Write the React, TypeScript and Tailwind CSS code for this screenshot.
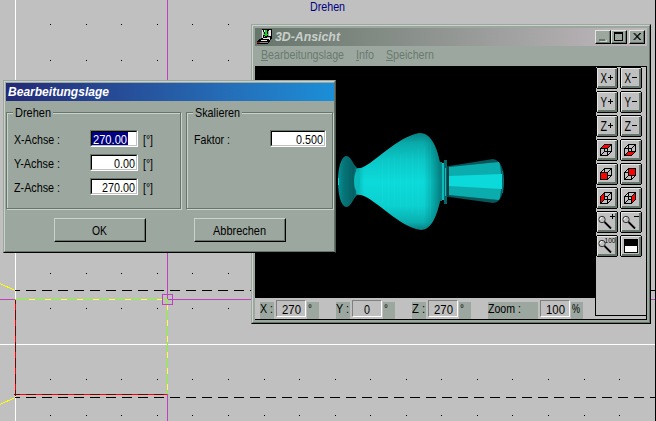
import React from "react";

const FONT = "font-['Liberation_Sans',Arial,sans-serif]";
const XS = Array.from({ length: 18 }, (_, i) => Math.floor(15.2 + 35.55 * (i + 1)));
const YS = [24, 60, 95, 131, 166, 202, 237, 273, 308, 379, 415];

function Drawing() {
  return (
    <svg className="absolute inset-0" width="656" height="421" shapeRendering="crispEdges" fill="none">
      {YS.map((y) => XS.map((x) => <rect key={`${x}-${y}`} x={x} y={y} width="1" height="1" fill="#000" />))}
      <path d="M15.5 0V421M0 344.5H655" stroke="#fff" />
      <path d="M10 290.5H655M10 397.5H655" stroke="#000" strokeDasharray="10 6" />
      <path d="M0 290.5H15M0 397.5H15" stroke="#c0c0c0" />
      <path d="M0 283.5L15 290.5M0 404.5L15 397.5" stroke="#ff0" />
      <path d="M167.5 0V421M0 299.5H655" stroke="#c040c0" />
      <path d="M15 299.5H167M167.5 299V394" stroke="#80ff20" />
      <path d="M29 299.5H162" stroke="#ffff40" strokeDasharray="6 10" />
      <path d="M167.5 304V394" stroke="#ffff40" strokeDasharray="6 10" />
      <path d="M15.5 300V396M14 394.5H167" stroke="#800000" />
      <path d="M15.5 304V394M20 394.5H167" stroke="#f00" strokeDasharray="6 10" />
      <rect x="162.5" y="294.5" width="10" height="10" stroke="#c040c0" />
      <path d="M655.5 0V421" stroke="#000" />
    </svg>
  );
}

function T({ children, w, className = "" }: { children: string; w: number; className?: string }) {
  return (
    <svg width={w} height="16" className={`shrink-0 overflow-visible ${className}`}>
      <text x="0" y="13" textLength={w} lengthAdjust="spacingAndGlyphs" fill="currentColor" className={`${FONT} text-[13px]`}>
        {children}
      </text>
    </svg>
  );
}

function Field({ value, w, wide, selected }: { value: string; w: number; wide?: boolean; selected?: boolean }) {
  return (
    <div className={`${wide ? "w-[56px]" : "w-[48px]"} flex h-[17px] border border-t-[#66766b] border-l-[#66766b] border-r-white border-b-white`}>
      <div className={`flex flex-1 items-center border border-t-black border-l-black border-r-[#c0c0c0] border-b-[#c0c0c0] bg-white ${selected ? "justify-start" : "justify-end"}`}>
        <div className={`flex h-[13px] items-center px-px ${selected ? "bg-[#000080] text-white" : ""}`}>
          <T w={w}>{value}</T>
        </div>
      </div>
    </div>
  );
}

function Group({ title, tw, children, className }: { title: string; tw: number; children: React.ReactNode; className: string }) {
  return (
    <div className={`h-[97px] border border-[#66766b] shadow-[1px_1px_0_#c9d3cc,inset_1px_1px_0_#c9d3cc] ${className}`}>
      <div className="-mt-[9px] ml-[6px] flex w-fit bg-[#9ca89f] px-[2px]">
        <T w={tw}>{title}</T>
      </div>
      {children}
    </div>
  );
}

function AxisRow({ label, value, w, selected }: { label: string; value: string; w: number; selected?: boolean }) {
  return (
    <div className="flex h-[17px] items-center">
      <div className="flex w-[76px]"><T w={46}>{label}</T></div>
      <Field value={value} w={w} selected={selected} />
      <T w={10} className="ml-[5px]">[°]</T>
    </div>
  );
}

function PushButton({ children, w }: { children: string; w: number }) {
  return (
    <button className="flex h-[24px] w-[92px] border border-t-[#c9d3cc] border-l-[#c9d3cc] border-r-black border-b-black">
      <span className="flex h-full flex-1 items-center justify-center border-r border-b border-[#66766b]">
        <T w={w}>{children}</T>
      </span>
    </button>
  );
}

function Dialog() {
  return (
    <div className="absolute left-[3px] top-[80px] h-[173px] w-[333px] border border-t-[#9ca89f] border-l-[#9ca89f] border-r-[#4c5a51] border-b-black bg-[#9ca89f] text-black">
      <div className="h-full border border-t-[#c9d3cc] border-l-[#c9d3cc] border-r-[#66766b] border-b-[#66766b] pt-px pl-px">
        <div className="flex h-[18px] w-[328px] items-center bg-linear-to-r from-[#232a76] to-[#1a8fd8] pl-[2px] text-white">
          <svg width="101" height="16" className="overflow-visible">
            <text x="0" y="12" textLength="101" lengthAdjust="spacingAndGlyphs" fill="currentColor" className={`${FONT} text-[12.5px] font-bold italic`}>Bearbeitungslage</text>
          </svg>
        </div>
        <div className="mt-[11px] flex gap-[5px]">
          <Group title="Drehen" tw={36} className="w-[175px]">
            <div className="mt-[10px] flex flex-col gap-[7px] pl-[7px]">
              <AxisRow label="X-Achse :" value="270.00" w={34} selected />
              <AxisRow label="Y-Achse :" value="0.00" w={21} />
              <AxisRow label="Z-Achse :" value="270.00" w={33} />
            </div>
          </Group>
          <Group title="Skalieren" tw={45} className="w-[147px]">
            <div className="mt-[10px] flex h-[17px] items-center pl-[7px]">
              <div className="flex w-[76px]"><T w={36}>Faktor :</T></div>
              <Field value="0.500" w={27} wide />
            </div>
          </Group>
        </div>
        <div className="mt-[9px] ml-[48px] flex gap-[48px]">
          <PushButton w={15}>OK</PushButton>
          <PushButton w={53}>Abbrechen</PushButton>
        </div>
      </div>
    </div>
  );
}

function MenuItem({ children, w, u }: { children: string; w: number; u: number }) {
  return (
    <svg width={w} height="16" className="overflow-visible text-[#697a70]">
      <text x="0" y="11" textLength={w} lengthAdjust="spacingAndGlyphs" fill="currentColor" className={`${FONT} text-[12.5px]`}>{children}</text>
      <path d={`M0 12.5H${u}`} stroke="currentColor" shapeRendering="crispEdges" />
    </svg>
  );
}

function CaptionButton({ children }: { children: React.ReactNode }) {
  return (
    <button className="block h-[14px] w-[16px] border border-t-[#e0e5e1] border-l-[#e0e5e1] border-r-black border-b-black bg-[#9ca89f]">
      <svg width="14" height="12" className="block" shapeRendering="crispEdges" fill="none" stroke="#000">
        <path d="M13.5 0V11.5H0" stroke="#66766b" />
        {children}
      </svg>
    </button>
  );
}

function AppIcon() {
  return (
    <svg width="16" height="16" className="block" shapeRendering="crispEdges">
      <path d="M5 0H15V9L11 15H0V12L5 9Z" fill="#000" />
      <path d="M5 1H6V9H5ZM7 1H9V3H7ZM12 1H14V7H12ZM6 9H12V10H6ZM4 11H10V12H4ZM12 9H13V11H12Z" fill="#e8e8e8" />
      <path d="M11 2H12V7H11ZM6 3H7V6H6Z" fill="#aaa" />
      <path d="M8 1H10V7H8ZM7 5H11V6H7Z" fill="#10d820" />
      <path d="M7 7H8V8H7ZM10 8H13V9H10Z" fill="#aaa" />
      <path d="M0 13H3V14H0Z" fill="#b01020" />
      <path d="M3 13H11V14H3Z" fill="#888" />
    </svg>
  );
}

const BODY = "M356 169L361 168C376 162 397 137 419 133C432 132 438 151 440 163V201C437 214 432 230 421 230C400 228 376 199 361 195L356 194Z";

function Vase() {
  const rows = Array.from({ length: 9 }, (_, i) => i);
  return (
    <svg width="341" height="232" viewBox="255 66 341 232" className="block bg-black">
      <defs>
        <linearGradient id="body" x1="0" y1="0" x2="0" y2="1">
          <stop offset="0" stopColor="#087f80" />
          <stop offset=".1" stopColor="#0aa9a9" />
          <stop offset=".28" stopColor="#0cc7c7" />
          <stop offset=".5" stopColor="#0cdada" />
          <stop offset=".75" stopColor="#0cd0d0" />
          <stop offset=".92" stopColor="#0aafaf" />
          <stop offset="1" stopColor="#087f80" />
        </linearGradient>
        <linearGradient id="edge" x1="0" y1="0" x2="1" y2="0">
          <stop offset="0" stopColor="#055" stopOpacity=".35" />
          <stop offset=".1" stopColor="#077" stopOpacity="0" />
          <stop offset=".8" stopColor="#077" stopOpacity="0" />
          <stop offset="1" stopColor="#055" stopOpacity=".65" />
        </linearGradient>
        <linearGradient id="foot" x1="0" y1="0" x2="1" y2="0">
          <stop offset="0" stopColor="#089395" />
          <stop offset=".25" stopColor="#067477" />
          <stop offset=".65" stopColor="#056064" />
          <stop offset="1" stopColor="#089798" />
        </linearGradient>
      </defs>
      <path d="M346 156C351 156 353 164 357 168H362V195H357C353 199 351 207 346 207C341 206 338 195 338 181C338 168 341 157 346 156Z" fill="url(#foot)" />
      <path d="M338 178H339V185H338Z" fill="#0cd6d6" />
      <path d={BODY} fill="url(#body)" />
      <path d={BODY} fill="url(#edge)" />
      <g stroke="#5ff" strokeOpacity=".06" fill="none" shapeRendering="crispEdges">
        {rows.map((i) => <path key={i} d={`M${382 + i * 6}.5 ${160 - i * 2}V${203 + i * 2}`} />)}
      </g>
      <ellipse cx="357" cy="181" rx="3" ry="10" fill="#0ab9ba" />
      <path d="M440 162H442V201H440Z" fill="#087f82" />
      <path d="M442 163H444V200H442Z" fill="#0bbcbd" />
      <path d="M444 160H447V204H444Z" fill="#066568" />
      <path d="M445 168H446V196H445Z" fill="#0bbabb" />
      <path d="M447 166H449V197H447Z" fill="#043d3f" />
      <path d="M449 166L493 159C500 160 504 168 504 181C504 194 500 203 493 203L449 197Z" fill="#07575a" />
      <path d="M449 167L499 162C502 168 502 195 499 200L449 195Z" fill="#0aacae" />
      <path d="M449 176L502 174V189L449 186Z" fill="#0cdada" />
      <path d="M502.5 171Q504 181 502.5 193" stroke="#087b7e" fill="none" />
    </svg>
  );
}

function Cube({ face }: { face: string }) {
  return (
    <g shapeRendering="crispEdges" fill="none" stroke="#000">
      <path d="M3.5 8.5H10.5V15.5H3.5ZM7.5 4.5H14.5V11.5H7.5ZM3.5 8.5L7.5 4.5M10.5 8.5L14.5 4.5M3.5 15.5L7.5 11.5M10.5 15.5L14.5 11.5" />
      <path d={face} fill="#f00" />
    </g>
  );
}

function Lens({ mark }: { mark?: string }) {
  return (
    <g fill="none" stroke="#000">
      <circle cx="5" cy="7.5" r="3.2" fill="#c0c0c0" stroke="#333" />
      <path d="M3 7.5Q3.2 5.7 5 5.5" stroke="#fff" />
      <path d="M7.5 10L14 16.5" strokeWidth="1.8" />
      {mark && <path d={mark} shapeRendering="crispEdges" />}
    </g>
  );
}

function Letter({ d, plus }: { d: string; plus: boolean }) {
  return (
    <g fill="none" stroke="#000">
      <text x="3.5" y="14.5" textLength="6.5" lengthAdjust="spacingAndGlyphs" stroke="none" fill="#000" className={`${FONT} text-[14.5px]`}>{d}</text>
      <path d={plus ? "M10.5 9.5H15.5M13 7V12" : "M10.5 9.5H15.5"} shapeRendering="crispEdges" />
    </g>
  );
}

const TOOLS: React.ReactNode[] = [
  <Letter d="X" plus />, <Letter d="X" plus={false} />,
  <Letter d="Y" plus />, <Letter d="Y" plus={false} />,
  <Letter d="Z" plus />, <Letter d="Z" plus={false} />,
  <Cube face="M3.5 8.5L7.5 4.5H14.5L10.5 8.5Z" />, <Cube face="M3.5 15.5L7.5 11.5H14.5L10.5 15.5Z" />,
  <Cube face="M3.5 8.5H10.5V15.5H3.5Z" />, <Cube face="M7.5 4.5H14.5V11.5H7.5Z" />,
  <Cube face="M3.5 8.5L7.5 4.5V11.5L3.5 15.5Z" />, <Cube face="M10.5 8.5L14.5 4.5V11.5L10.5 15.5Z" />,
  <Lens mark="M13 4.5H18M15.5 2V7" />, <Lens mark="M13 4.5H18" />,
  <g><Lens /><text x="7.5" y="7" textLength="11" lengthAdjust="spacingAndGlyphs" className={`${FONT} text-[8px]`}>100</text></g>,
  <g shapeRendering="crispEdges"><path d="M3 3H17V17H3Z" fill="#000" /><path d="M4 10H16V16H4Z" fill="#fff" /></g>,
];

function ToolButton({ children }: { children: React.ReactNode }) {
  return (
    <button className="h-[22px] w-[22px]">
      <svg width="22" height="22" className="block">
        <g shapeRendering="crispEdges" fill="none">
          <path d="M1 .5H21M1 21.5H21M21.5 1V21M.5 1V21" stroke="#000" />
          <path d="M1.5 20V1.5H20" stroke="#e4e8e5" />
          <path d="M2 20H20V2" stroke="#66766b" strokeWidth="2" />
        </g>
        <g transform="translate(1 1)">{children}</g>
      </svg>
    </button>
  );
}

function StatusField({ label, lw, value, vw, unit, wide }: { label: string; lw: number; value: string; vw: number; unit: string; wide?: boolean }) {
  return (
    <div className="flex items-end">
      <div className={`flex h-[17px] items-start bg-[#9ca89f] ${wide ? "w-[50px]" : "w-[14px]"}`}>
        <T w={lw} className="-mt-[2px]">{label}</T>
      </div>
      <div className="mx-[2px] mb-[2px] flex h-[17px] w-[30px] items-center justify-center border border-t-[#808080] border-l-[#808080] border-r-white border-b-white">
        <T w={vw}>{value}</T>
      </div>
      <div className="-ml-px flex h-[17px] w-[12px] items-start bg-[#9ca89f] pl-px">
        <T w={unit === "%" ? 8 : 4} className="-mt-[2px]">{unit}</T>
      </div>
    </div>
  );
}

function ViewWindow() {
  return (
    <div className="absolute left-[251px] top-[24px] h-[300px] w-[400px] border border-t-[#9ca89f] border-l-[#9ca89f] border-r-black border-b-black bg-[#9ca89f]">
      <div className="h-full border border-t-[#c9d3cc] border-l-[#c9d3cc] border-r-[#66766b] border-b-[#66766b] pt-[2px] pl-[2px]">
        <div className="flex h-[18px] w-[392px] items-center bg-linear-to-r from-[#66766b] to-[#c2b9bf]">
          <div className="ml-[2px]"><AppIcon /></div>
          <svg width="65" height="16" className="ml-[2px] overflow-visible text-[#c9cfcb]">
            <text x="0" y="12" textLength="65" lengthAdjust="spacingAndGlyphs" fill="currentColor" className={`${FONT} text-[12.5px] font-bold italic`}>3D-Ansicht</text>
          </svg>
          <div className="mr-[2px] ml-auto flex">
            <CaptionButton><path d="M3 8H9V10H3Z" fill="#66766b" stroke="none" /><path d="M4 10.5H10V9" stroke="#c9d3cc" /></CaptionButton>
            <CaptionButton><path d="M2 1H11V10H2ZM3 3V9H10V3Z" fill="#000" fillRule="evenodd" stroke="none" /></CaptionButton>
            <div className="ml-[2px]"><CaptionButton><path d="M3.5 2L10 9M4.5 2L11 9M10 2L3.5 9M11 2L4.5 9" shapeRendering="auto" strokeWidth=".9" /></CaptionButton></div>
          </div>
        </div>
        <div className="flex h-[20px] items-center gap-[12px] pl-[6px]">
          <MenuItem w={83} u={7}>Bearbeitungslage</MenuItem>
          <MenuItem w={18} u={3}>Info</MenuItem>
          <MenuItem w={48} u={7}>Speichern</MenuItem>
        </div>
        <div className="flex h-[254px] w-[392px] flex-col border-r border-b border-black bg-[#c0c0c0]">
          <div className="flex h-[253px]">
            <div className="w-[341px]">
              <Vase />
              <div className="flex h-[21px] items-end gap-[17px] pl-[5px]">
                <StatusField label="X :" lw={13} value="270" vw={19} unit="°" />
                <StatusField label="Y :" lw={13} value="0" vw={6} unit="°" />
                <StatusField label="Z :" lw={13} value="270" vw={19} unit="°" />
                <StatusField label="Zoom :" lw={33} value="100" vw={19} unit="%" wide />
              </div>
            </div>
            <div className="-ml-px h-[250px] w-[51px] border border-r-0 border-black bg-[#c0c0c0]">
              <div className="grid w-[46px] grid-cols-2 gap-[2px]">
                {TOOLS.map((t, i) => <ToolButton key={i}>{t}</ToolButton>)}
              </div>
            </div>
          </div>
        </div>
      </div>
    </div>
  );
}

export default function App() {
  return (
    <main className={`relative h-[421px] w-[656px] overflow-hidden bg-[#c0c0c0] ${FONT}`}>
      <Drawing />
      <div className="-mt-[2px] flex justify-center pr-[2px] text-[#000080]"><T w={35} className="relative">Drehen</T></div>
      <ViewWindow />
      <Dialog />
    </main>
  );
}
